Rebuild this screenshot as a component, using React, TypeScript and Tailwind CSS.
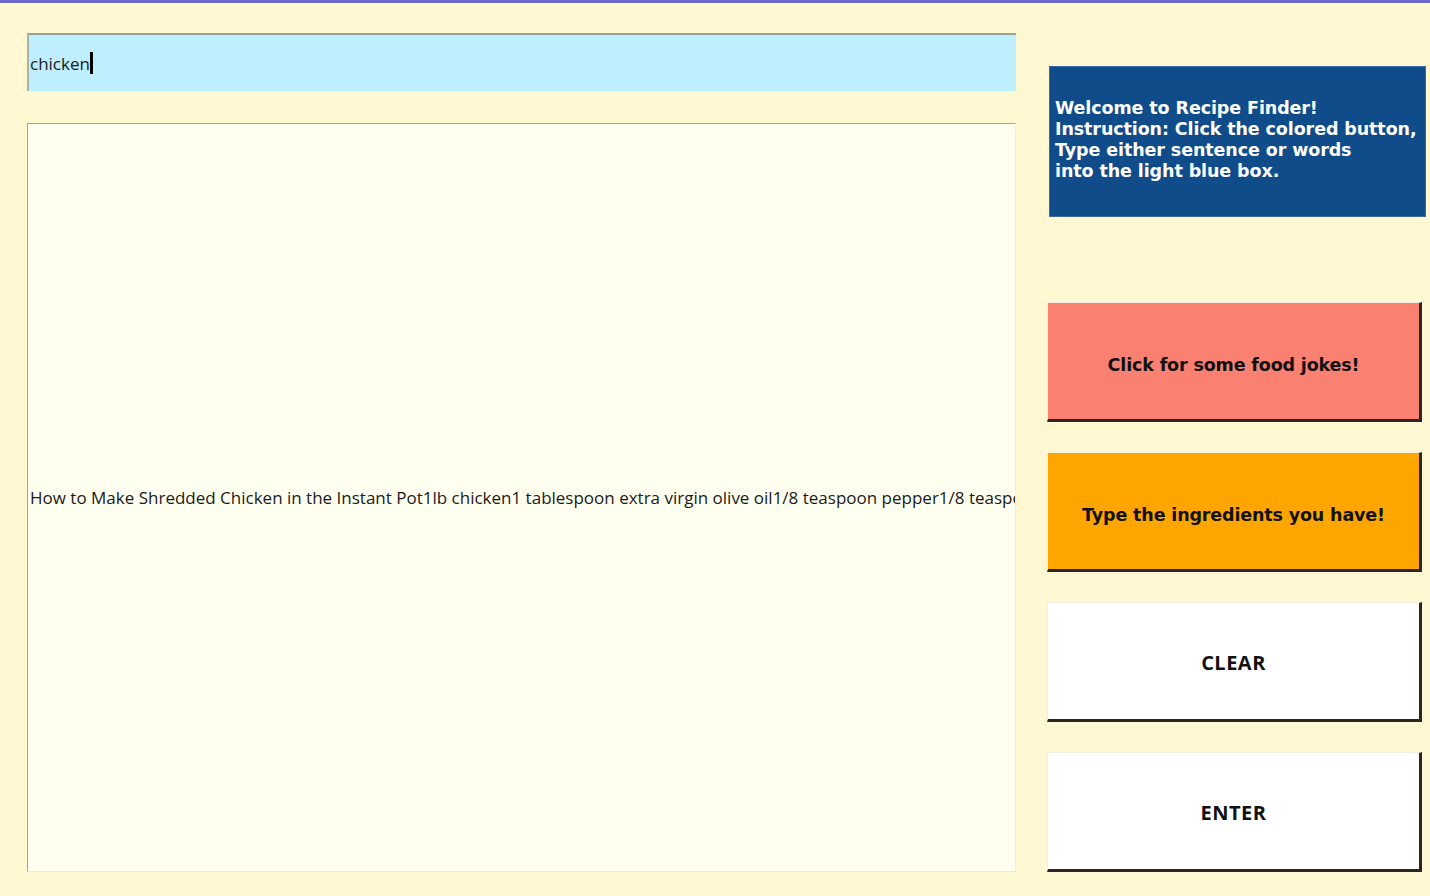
export default function App() {
  const recipe =
    "How to Make Shredded Chicken in the Instant Pot1lb chicken1 tablespoon extra virgin olive oil1/8 teaspoon pepper1/8 teaspoon salt";
  return (
    <div className="w-[1430px] h-[896px] overflow-hidden bg-[#fff8d2] flex flex-col">
      <div className="h-[3px] bg-[#6a6ac8] shrink-0" />
      <div className="flex flex-row flex-1">
        <div className="flex flex-col pl-[27px] pt-[30px] w-[1016px]">
          <div className="h-[58px] bg-[#bfefff] border-t-2 border-l-2 border-t-[#97a39a] border-l-[#a9b3ad] flex items-center pl-[1px]">
            <span className="text-[17px] text-[#1a1a1a] leading-none" style={{ fontFamily: '"Open Sans", "Noto Sans", sans-serif' }}>
              chicken
            </span>
            <span className="inline-block w-[3px] h-[22px] bg-black" />
          </div>
          <div className="mt-[32px] h-[749px] bg-[#fffff0] border-t border-l border-t-[#a2a89f] border-l-[#9ea39a] border-b border-r border-b-[#ece7cf] border-r-[#f2eed8] flex items-center overflow-hidden">
            <span
              className="whitespace-nowrap text-[17px] text-[#1a1a1a] pl-[2px]"
              style={{ fontFamily: '"Open Sans", "Noto Sans", sans-serif' }}
            >
              {recipe}
            </span>
          </div>
        </div>
        <div className="flex flex-col pl-[31px]">
          <div className="mt-[63px] ml-[2px] w-[377px] h-[151px] bg-[#0f4c89] border border-[#3a6aa0] flex items-center pl-[5px] pb-[4px]">
            <p
              className="text-white font-bold text-[17.5px] leading-[21px]"
              style={{ fontFamily: '"DejaVu Sans", Verdana, sans-serif', letterSpacing: "-0.1px" }}
            >
              Welcome to Recipe Finder!
              <br />
              Instruction: Click the colored button,
              <br />
              Type either sentence or words
              <br />
              into the light blue box.
            </p>
          </div>
          <Btn className="mt-[85px] bg-[#fa8072]" label="Click for some food jokes!" tahoma />
          <Btn className="mt-[30px] bg-[#ffa500]" label="Type the ingredients you have!" tahoma />
          <Btn className="mt-[30px] bg-white" label="CLEAR" />
          <Btn className="mt-[30px] bg-white" label="ENTER" />
        </div>
      </div>
    </div>
  );
}

function Btn({ className, label, tahoma }: { className: string; label: string; tahoma?: boolean }) {
  return (
    <div
      className={`w-[375px] h-[120px] shrink-0 flex items-center justify-center border-t border-l border-t-[#f4f0e0] border-l-[#f4f0e0] border-r-[3px] border-b-[3px] border-r-[#2a2622] border-b-[#2a2622] ${className} ${tahoma ? "pt-[8px]" : "pt-[4px]"}`}
    >
      <span
        className="font-bold text-[#111]"
        style={
          tahoma
            ? { fontFamily: '"DejaVu Sans", Tahoma, sans-serif', letterSpacing: "-0.15px", fontSize: "17.5px" }
            : { fontFamily: '"Open Sans", "Noto Sans", sans-serif', fontSize: "20px", letterSpacing: "0.5px" }
        }
      >
        {label}
      </span>
    </div>
  );
}
